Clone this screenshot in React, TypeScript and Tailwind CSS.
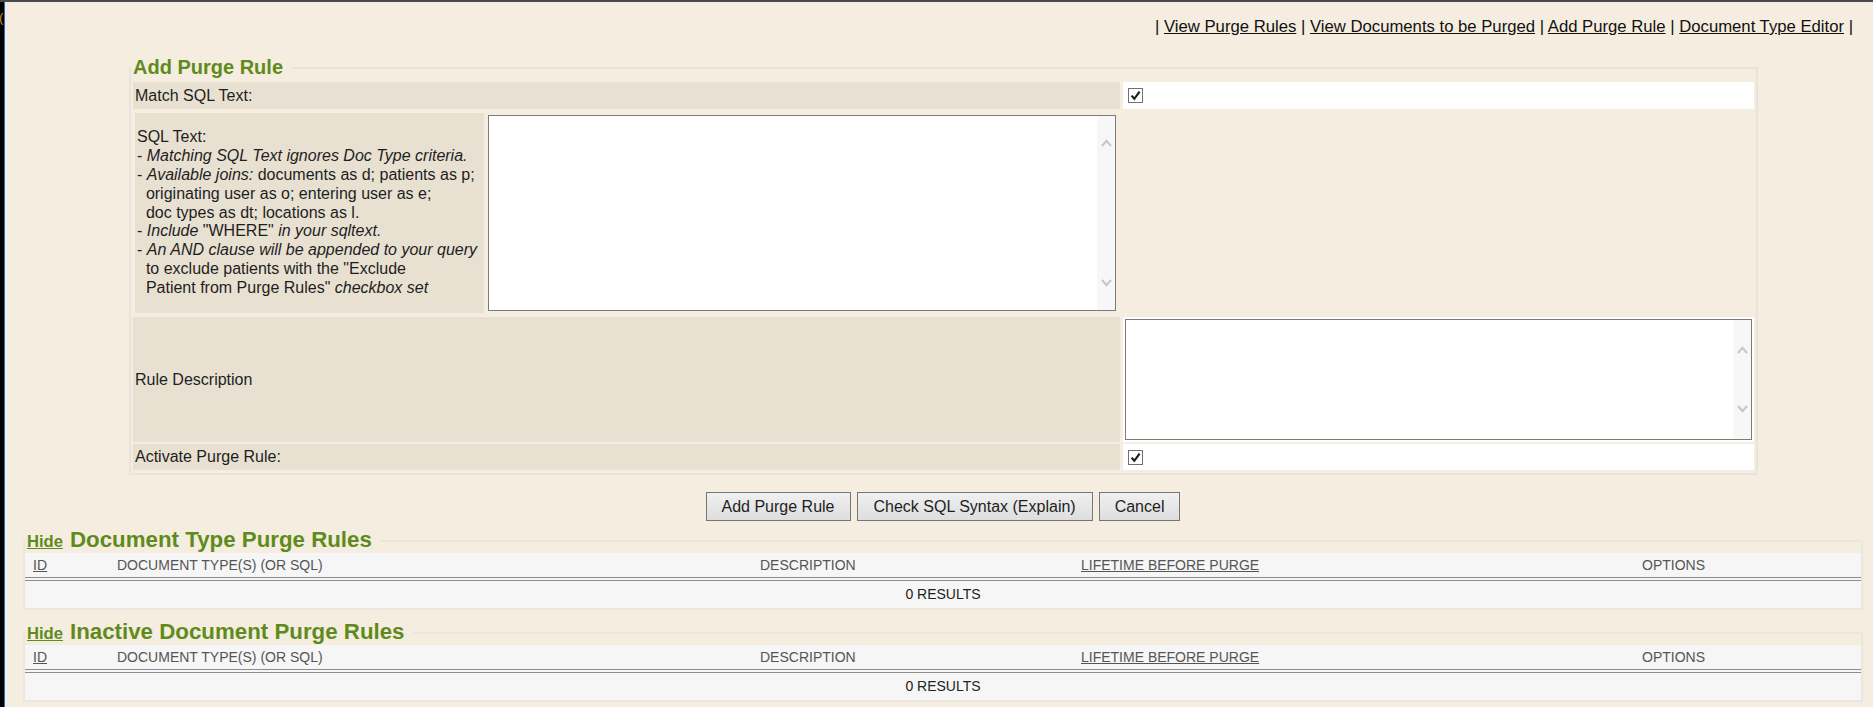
import React from "react";

const GREEN = "text-[#5f8b1d]";

function Check() {
  return (
    <span className="inline-flex h-[15px] w-[15px] items-center justify-center border border-[#707070] bg-white">
      <svg width="11" height="11" viewBox="0 0 11 11">
        <path d="M1.6 5.6 L4.3 8.8 L9.6 1.6" fill="none" stroke="#1e1e1e" strokeWidth="2.2" />
      </svg>
    </span>
  );
}

function Chevron({ up }: { up?: boolean }) {
  return (
    <svg width="11" height="8" viewBox="0 0 11 8">
      <path
        d={up ? "M1 7 L5.5 1.8 L10 7" : "M1 1 L5.5 6.2 L10 1"}
        fill="none"
        stroke="#c6c6c6"
        strokeWidth="2"
      />
    </svg>
  );
}

function FakeTextarea({ className, pad }: { className: string; pad: string }) {
  return (
    <div className={"flex border border-[#7a7a7a] bg-white " + className}>
      <div className="flex-1" />
      <div className={"flex w-[18px] flex-col items-center justify-between bg-[#f7f7f7] " + pad}>
        <Chevron up />
        <Chevron />
      </div>
    </div>
  );
}

function Button({ children, className = "" }: { children: React.ReactNode; className?: string }) {
  return (
    <button
      className={
        "h-[29px] border border-[#767676] bg-gradient-to-b from-[#f0f0f0] to-[#dedede] text-[16px] leading-[18px] text-[#1e1e1e] " +
        className
      }
    >
      {children}
    </button>
  );
}

function RulesTable() {
  return (
    <div className="bg-[#f6f6f6]">
      <div className="grid h-[28px] grid-cols-[84px_643px_321px_561px_1fr] items-center border-b-[4px] border-double border-[#8c8c8c] text-[14px] text-[#555555]">
        <div className="pl-[8px]">
          <span className="underline">ID</span>
        </div>
        <div className="pl-[8px]">DOCUMENT TYPE(S) (OR SQL)</div>
        <div className="pl-[8px]">DESCRIPTION</div>
        <div className="pl-[8px]">
          <span className="underline">LIFETIME BEFORE PURGE</span>
        </div>
        <div className="pl-[8px]">OPTIONS</div>
      </div>
      <div className="flex h-[27px] items-center justify-center text-[14px] text-[#222222]">0 RESULTS</div>
    </div>
  );
}

function RulesSection({ title, className }: { title: string; className: string }) {
  return (
    <fieldset className={"ml-[18px] mr-[10px] border-2 border-[#ebe7df] " + className}>
      <legend className="flex items-baseline gap-[7px] pl-[2px] pr-[8px] leading-[23px]">
        <span className={"text-[16.6px] font-bold underline " + GREEN}>Hide</span>
        <span className={"text-[22.3px] font-bold " + GREEN}>{title}</span>
      </legend>
      <RulesTable />
    </fieldset>
  );
}

export default function App() {
  return (
    <div className="flex h-[707px] w-full overflow-hidden border-t-2 border-[#4a4a4a] bg-[#f5eddf] font-['Liberation_Sans',Arial,Helvetica,sans-serif] text-[16px] text-[#1e1e1e]">
      <div className="relative w-[5px] shrink-0 border-r border-[#2a6fc9] bg-black">
        <span className="absolute left-[-1px] top-[9px] text-[13px] leading-[14px] text-[#d8892a]">(</span>
      </div>
      <div className="flex min-w-0 flex-1 flex-col">
        <div className="pr-[20px] pt-[16px] text-right text-[16.7px] leading-[18px] text-[#111111]">
          | <span className="underline">View Purge Rules</span> |{" "}
          <span className="underline">View Documents to be Purged</span> |{" "}
          <span className="underline">Add Purge Rule</span> |{" "}
          <span className="underline">Document Type Editor</span> |
        </div>

        <fieldset className="ml-[124px] mt-[20px] w-[1628px] border-2 border-[#e8e4dc]">
          <legend className={"pl-[2px] pr-[9px] text-[20px] font-bold leading-[23px] " + GREEN}>Add Purge Rule</legend>
          <div className="grid grid-cols-[987px_631px] gap-x-[3px] gap-y-[2px] px-[2px] pb-[3px] pt-[3px]">
            <div className="flex h-[27px] items-center bg-[#e8e1d2] pl-[2px]">Match SQL Text:</div>
            <div className="flex h-[27px] items-center bg-white pl-[5px]">
              <Check />
            </div>

            <div className="grid h-[204px] grid-cols-[349px_1fr] gap-x-[2px] p-[2px]">
              <div className="flex flex-col justify-center bg-[#e8e1d2] pl-[2px] leading-[18.8px]">
                <div>SQL Text:</div>
                <div>
                  - <i>Matching SQL Text ignores Doc Type criteria.</i>
                </div>
                <div>
                  - <i>Available joins:</i> documents as d; patients as p;
                </div>
                <div>{"\u00a0\u00a0"}originating user as o; entering user as e;</div>
                <div>{"\u00a0\u00a0"}doc types as dt; locations as l.</div>
                <div>
                  - <i>Include</i> "WHERE" <i>in your sqltext.</i>
                </div>
                <div>
                  - <i>An AND clause will be appended to your query</i>
                </div>
                <div>{"\u00a0\u00a0"}to exclude patients with the "Exclude</div>
                <div>
                  {"\u00a0\u00a0"}Patient from Purge Rules" <i>checkbox set</i>
                </div>
              </div>
              <div className="p-[2px]">
                <FakeTextarea className="h-full w-full" pad="py-[23px]" />
              </div>
            </div>
            <div className="h-[204px]" />

            <div className="flex h-[125px] items-center bg-[#e8e1d2] pl-[2px]">Rule Description</div>
            <div className="h-[125px] bg-white p-[2px]">
              <FakeTextarea className="h-full w-full" pad="py-[26px]" />
            </div>

            <div className="flex h-[26px] items-center bg-[#e8e1d2] pl-[2px]">Activate Purge Rule:</div>
            <div className="flex h-[26px] items-center bg-white pl-[5px]">
              <Check />
            </div>
          </div>
        </fieldset>

        <div className="mt-[17px] flex justify-center gap-[6px] pl-[8px]">
          <Button className="px-[15px]">Add Purge Rule</Button>
          <Button className="px-[16px]">Check SQL Syntax (Explain)</Button>
          <Button className="px-[15px]">Cancel</Button>
        </div>

        <RulesSection title="Document Type Purge Rules" className="mt-[7px]" />
        <RulesSection title="Inactive Document Purge Rules" className="mt-[10px]" />
      </div>
    </div>
  );
}
